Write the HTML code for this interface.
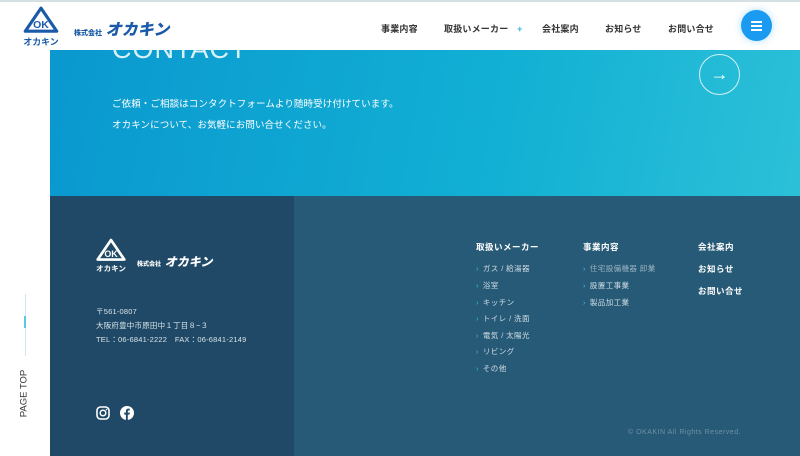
<!DOCTYPE html>
<html><head><meta charset="utf-8"><style>
*{margin:0;padding:0;box-sizing:border-box}
body{width:800px;height:456px;overflow:hidden;background:#fff;font-family:"Liberation Sans","Noto Sans CJK JP",sans-serif;position:relative}
.a{position:absolute;white-space:nowrap}
.hdr{left:0;top:0;width:800px;height:50px;background:#fff;border-top:2px solid #d5e0e4;z-index:5}
.nav{top:20px;font-size:9px;font-weight:bold;color:#333;letter-spacing:.2px}
.contact{left:50px;top:50px;width:750px;height:146px;background:linear-gradient(100deg,#0a98cf 0%,#12b0d4 60%,#2cc0d8 100%)}
.fl{left:50px;top:196px;width:244px;height:260px;background:#1f4966}
.fr{left:294px;top:196px;width:506px;height:260px;background:#275a77}
.w{color:#fff}
.sm{font-size:7.5px;color:#d8e4ea;letter-spacing:.2px}
.h{font-size:8.5px;font-weight:bold;color:#fff;letter-spacing:.5px}
.li{font-size:7.5px;color:#d0dde5;letter-spacing:.4px}
.li:before{content:"›";color:#3cc3e0;margin-right:4px}
</style></head><body>
<div class="a hdr">
 <svg class="a" style="left:21px;top:4px" width="40" height="42" viewBox="0 0 36 40">
  <path d="M18 2 L33 24 L3 24 Z" fill="none" stroke="#1a5aa8" stroke-width="3" stroke-linejoin="round"/>
  <text x="18" y="21" font-size="10" font-weight="bold" fill="#1a5aa8" text-anchor="middle" font-family="Liberation Sans">OK</text>
  <text x="18" y="37" font-size="8.5" font-weight="bold" fill="#1a5aa8" text-anchor="middle" font-family="Noto Sans CJK JP">オカキン</text>
 </svg>
 <div class="a" style="left:74px;top:14px;color:#1a5aa8;font-weight:900;font-family:'Noto Sans CJK JP',sans-serif"><span style="font-size:7px">株式会社</span> <span style="font-size:16px;font-style:italic">オカキン</span></div>
 <div class="a nav" style="left:381px">事業内容</div>
 <div class="a nav" style="left:444px">取扱いメーカー <span style="color:#3cb8e0;margin-left:6px">+</span></div>
 <div class="a nav" style="left:542px">会社案内</div>
 <div class="a nav" style="left:605px">お知らせ</div>
 <div class="a nav" style="left:668px">お問い合せ</div>
 <div class="a" style="left:741px;top:8px;width:31px;height:31px;border-radius:50%;background:#1a9af0;box-shadow:0 0 8px rgba(26,154,240,.35)">
  <div class="a" style="left:10px;top:11px;width:11px;height:1.5px;background:#fff"></div>
  <div class="a" style="left:10px;top:15px;width:11px;height:1.5px;background:#fff"></div>
  <div class="a" style="left:10px;top:19px;width:11px;height:1.5px;background:#fff"></div>
 </div>
</div>
<div class="a contact">
 <div class="a w" style="left:62px;top:-16px;font-size:27px;letter-spacing:1px;opacity:.85">CONTACT</div>
 <div class="a w" style="left:62px;top:46px;font-size:9.5px;letter-spacing:.1px">ご依頼・ご相談はコンタクトフォームより随時受け付けています。</div>
 <div class="a w" style="left:62px;top:67px;font-size:9.5px;letter-spacing:.1px">オカキンについて、お気軽にお問い合せください。</div>
 <div class="a" style="left:649px;top:4px;width:41px;height:41px;border:1px solid rgba(255,255,255,.8);border-radius:50%;color:#fff;font-size:18px;text-align:center;line-height:38px">→</div>
</div>
<div class="a fl">
 <svg class="a" style="left:45px;top:42px" width="32" height="36" viewBox="0 0 36 40">
  <path d="M18 2 L33 24 L3 24 Z" fill="none" stroke="#fff" stroke-width="3" stroke-linejoin="round"/>
  <text x="18" y="21" font-size="10" font-weight="bold" fill="#fff" text-anchor="middle" font-family="Liberation Sans">OK</text>
  <text x="18" y="37" font-size="8.5" font-weight="bold" fill="#fff" text-anchor="middle" font-family="Noto Sans CJK JP">オカキン</text>
 </svg>
 <div class="a w" style="left:87px;top:51px;font-weight:900;font-family:'Noto Sans CJK JP',sans-serif"><span style="font-size:6px">株式会社</span> <span style="font-size:12px;font-style:italic">オカキン</span></div>
 <div class="a sm" style="left:46px;top:110px">〒561-0807</div>
 <div class="a sm" style="left:46px;top:124px">大阪府豊中市原田中１丁目８−３</div>
 <div class="a sm" style="left:46px;top:138px">TEL：06-6841-2222　FAX：06-6841-2149</div>
 <svg class="a" style="left:46px;top:210px" width="14" height="14" viewBox="0 0 14 14"><rect x="1" y="1" width="12" height="12" rx="3.5" fill="none" stroke="#fff" stroke-width="1.6"/><circle cx="7" cy="7" r="2.8" fill="none" stroke="#fff" stroke-width="1.5"/><circle cx="10.5" cy="3.5" r=".8" fill="#fff"/></svg>
 <svg class="a" style="left:70px;top:210px" width="14" height="14" viewBox="0 0 14 14"><circle cx="7" cy="7" r="7" fill="#fff"/><path d="M7.8 14V8.6h1.7l.3-2H7.8V5.4c0-.6.2-1 1-1h1V2.7c-.2 0-.8-.1-1.5-.1-1.5 0-2.4.9-2.4 2.5v1.5H4.2v2h1.7V14z" fill="#1f4966"/></svg>
</div>
<div class="a fr">
 <div class="a h" style="left:182px;top:45px">取扱いメーカー</div>
 <div class="a li" style="left:182px;top:67px">ガス / 給湯器</div>
 <div class="a li" style="left:182px;top:84px">浴室</div>
 <div class="a li" style="left:182px;top:101px">キッチン</div>
 <div class="a li" style="left:182px;top:117px">トイレ / 洗面</div>
 <div class="a li" style="left:182px;top:134px">電気 / 太陽光</div>
 <div class="a li" style="left:182px;top:150px">リビング</div>
 <div class="a li" style="left:182px;top:167px">その他</div>
 <div class="a h" style="left:289px;top:45px">事業内容</div>
 <div class="a li" style="left:289px;top:67px;color:#9bb3c2">住宅設備機器 卸業</div>
 <div class="a li" style="left:289px;top:84px">設置工事業</div>
 <div class="a li" style="left:289px;top:101px">製品加工業</div>
 <div class="a h" style="left:404px;top:45px">会社案内</div>
 <div class="a h" style="left:404px;top:67px">お知らせ</div>
 <div class="a h" style="left:404px;top:89px">お問い合せ</div>
 <div class="a" style="left:334px;top:233px;font-size:7px;color:#6f8fa5;letter-spacing:.5px">© OKAKIN All Rights Reserved.</div>
</div>
<div class="a" style="left:25px;top:294px;width:1px;height:62px;background:#cfe6ee"></div>
<div class="a" style="left:24px;top:316px;width:2px;height:12px;background:#5cc7de"></div>
<div class="a" style="left:-6px;top:388px;width:60px;transform:rotate(-90deg);font-size:9.5px;color:#333;text-align:center">PAGE TOP</div>
</body></html>
